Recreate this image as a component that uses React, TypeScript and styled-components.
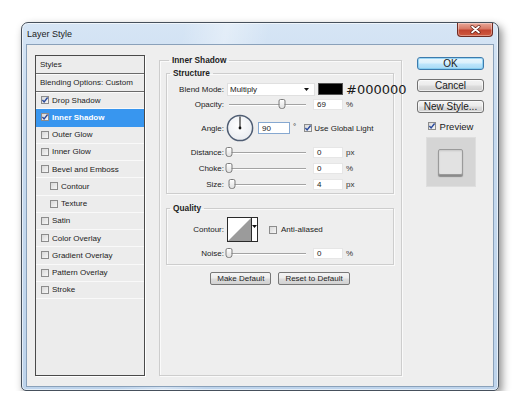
import { FC, ReactNode } from 'react';
import styled, { createGlobalStyle } from 'styled-components';

// effect list on the left side of the dialog
const STYLE_ITEMS = [
  { label: 'Drop Shadow', checked: true },
  { label: 'Inner Shadow', checked: true, selected: true },
  { label: 'Outer Glow' },
  { label: 'Inner Glow' },
  { label: 'Bevel and Emboss' },
  { label: 'Contour', sub: true },
  { label: 'Texture', sub: true },
  { label: 'Satin' },
  { label: 'Color Overlay' },
  { label: 'Gradient Overlay' },
  { label: 'Pattern Overlay' },
  { label: 'Stroke' },
];

const CheckBox: FC<{ checked?: boolean }> = ({ checked }) => (
  <Box>
    {checked && (
      <svg width="8" height="8" viewBox="0 0 8 8">
        <path d="M1.4 4.1 3.1 5.9 6.6 1.5" fill="none" stroke="#2a4a9c" strokeWidth="1.4" />
      </svg>
    )}
  </Box>
);

const Slider: FC<{ pos: number }> = ({ pos }) => (
  <Track>
    <Thumb style={{ left: `${pos * 100}%` }} />
  </Track>
);

interface SliderRowProps {
  label: string;
  value: string;
  unit: string;
  pos: number;
}

const SliderRow: FC<SliderRowProps> = ({ label, value, unit, pos }) => (
  <Row $h={14}>
    <Label>{label}</Label>
    <Slider pos={pos} />
    <Field>{value}</Field>
    <Unit>{unit}</Unit>
  </Row>
);

const Group: FC<{ title: string; children: ReactNode; className?: string }> = ({
  title,
  children,
  className,
}) => (
  <Fieldset className={className}>
    <Legend>{title}</Legend>
    {children}
  </Fieldset>
);

const App: FC = () => {
  return (
    <Page>
      <GlobalStyle />
      <Window>
        <TitleBar>
          <Title>Layer Style</Title>
          <CloseButton>
            <svg width="11" height="9" viewBox="0 0 11 9">
              <path d="M2 1.5 9 7.5M9 1.5 2 7.5" stroke="#5a1a12" strokeWidth="3" strokeLinecap="round" />
              <path d="M2 1.5 9 7.5M9 1.5 2 7.5" stroke="#fff" strokeWidth="1.7" strokeLinecap="round" />
            </svg>
          </CloseButton>
        </TitleBar>
        <Client>
          <StylesList>
            <ListHeader>Styles</ListHeader>
            <ListHeader>Blending Options: Custom</ListHeader>
            {STYLE_ITEMS.map((item) => (
              <Item key={item.label} $selected={item.selected} $sub={item.sub}>
                <CheckBox checked={item.checked} />
                <span>{item.label}</span>
              </Item>
            ))}
          </StylesList>

          <Settings title="Inner Shadow">
            <Group title="Structure">
              <Row $h={14}>
                <Label>Blend Mode:</Label>
                <Select>
                  <span>Multiply</span>
                  <svg width="5" height="3" viewBox="0 0 5 3">
                    <path d="M0 0h5L2.5 3z" fill="#111" />
                  </svg>
                </Select>
                <Swatch />
                <Hex>#000000</Hex>
              </Row>
              <Row $h={13}>
                <Label>Opacity:</Label>
                <Slider pos={0.69} />
                <Field>69</Field>
                <Unit>%</Unit>
              </Row>
              <Row $h={30}>
                <Label>Angle:</Label>
                <Dial>
                  <svg width="28" height="28" viewBox="0 0 28 28">
                    <defs>
                      <radialGradient id="dialFill" cx="45%" cy="40%" r="60%">
                        <stop offset="0" stopColor="#ffffff" />
                        <stop offset="1" stopColor="#e9ecf0" />
                      </radialGradient>
                    </defs>
                    <circle cx="14" cy="14" r="12.6" fill="url(#dialFill)" stroke="#4f5d73" strokeWidth="1.5" />
                    <line x1="14" y1="14" x2="14" y2="2.5" stroke="#1a1a1a" strokeWidth="1.1" />
                    <circle cx="14" cy="14" r="1.4" fill="#111" />
                  </svg>
                </Dial>
                <Field $focused>90</Field>
                <Degree>°</Degree>
                <CheckSpacer>
                  <CheckBox checked />
                </CheckSpacer>
                <CheckText>Use Global Light</CheckText>
              </Row>
              <SliderRow label="Distance:" value="0" unit="px" pos={0} />
              <SliderRow label="Choke:" value="0" unit="%" pos={0} />
              <SliderRow label="Size:" value="4" unit="px" pos={0.04} />
            </Group>

            <QualityGroup title="Quality">
              <Row $h={25}>
                <Label>Contour:</Label>
                <Contour>
                  <svg width="23" height="23" viewBox="0 0 23 23">
                    <path d="M0 23 23 0V23z" fill="#9b9b9b" />
                  </svg>
                  <ContourDrop>
                    <svg width="5" height="3" viewBox="0 0 5 3">
                      <path d="M0 0h5L2.5 3z" fill="#111" />
                    </svg>
                  </ContourDrop>
                </Contour>
                <CheckSpacer $gap={11}>
                  <CheckBox />
                </CheckSpacer>
                <CheckText $gap={4}>Anti-aliased</CheckText>
              </Row>
              <SliderRow label="Noise:" value="0" unit="%" pos={0} />
            </QualityGroup>

            <ButtonRow>
              <SmallButton>Make Default</SmallButton>
              <SmallButton>Reset to Default</SmallButton>
            </ButtonRow>
          </Settings>

          <Side>
            <DialogButton $default>OK</DialogButton>
            <DialogButton $top={9}>Cancel</DialogButton>
            <DialogButton $top={8}>New Style...</DialogButton>
            <PreviewRow>
              <CheckBox checked />
              <span>Preview</span>
            </PreviewRow>
            <PreviewBox>
              <PreviewTile />
            </PreviewBox>
          </Side>
        </Client>
      </Window>
    </Page>
  );
};

export default App;

const GlobalStyle = createGlobalStyle`
  html, body {
    margin: 0;
    background: #ffffff;
  }
  body {
    font-family: "Liberation Sans", Arial, sans-serif;
    color: #222;
  }
`;

const Page = styled.div`
  padding: 22px 0 0 21px;
`;

const Window = styled.div`
  width: 478px;
  height: 369px;
  box-sizing: border-box;
  display: flex;
  flex-direction: column;
  padding: 0 4px 3px;
  border: 1px solid #46505c;
  border-radius: 7px 7px 5px 5px;
  background:
    linear-gradient(100deg, rgba(255, 255, 255, 0) 30%, rgba(255, 255, 255, 0.35) 38%, rgba(255, 255, 255, 0) 46%),
    linear-gradient(180deg, #d6e5f5 0%, #c6daef 30%, #bed4ec 100%);
  box-shadow: 3px 4px 9px rgba(0, 0, 0, 0.45), inset 0 0 0 1px rgba(255, 255, 255, 0.6);
`;

const TitleBar = styled.div`
  height: 21px;
  display: flex;
  align-items: center;
  justify-content: space-between;
  padding: 0 1px;
`;

const Title = styled.div`
  font-size: 9px;
  color: #1c1c1c;
`;

const CloseButton = styled.div`
  align-self: flex-start;
  width: 36px;
  height: 14px;
  box-sizing: border-box;
  display: flex;
  align-items: center;
  justify-content: center;
  border: 1px solid #6f2b22;
  border-top: none;
  border-radius: 0 0 4px 4px;
  background: linear-gradient(180deg, #e9a899 0%, #d77966 45%, #c24430 55%, #cf5a3f 100%);
  box-shadow: inset 0 0 0 1px rgba(255, 255, 255, 0.35);
`;

const Client = styled.div`
  flex: 1;
  display: flex;
  padding: 10px 9px 10px 8px;
  border: 1px solid #8aa1ba;
  background: #eeeeee;
`;

/* left column: effect list */

const StylesList = styled.div`
  width: 110px;
  flex-shrink: 0;
  box-sizing: border-box;
  display: flex;
  flex-direction: column;
  border: 1px solid #4a4a4a;
  background: #ececec;
  box-shadow: 1px 1px 0 #ffffff;
`;

const ListHeader = styled.div`
  height: 18px;
  box-sizing: border-box;
  display: flex;
  align-items: center;
  padding-left: 4px;
  font-size: 8px;
  color: #1e1e1e;
  border-bottom: 1px solid #6a6a6a;
  box-shadow: 0 1px 0 #fbfbfb;
`;

const Item = styled.div<{ $selected?: boolean; $sub?: boolean }>`
  height: 17.25px;
  box-sizing: border-box;
  display: flex;
  align-items: center;
  gap: 3px;
  padding-left: ${(p) => (p.$sub ? 14 : 5)}px;
  font-size: 8px;
  font-weight: ${(p) => (p.$selected ? 700 : 400)};
  color: ${(p) => (p.$selected ? '#ffffff' : '#222')};
  background: ${(p) => (p.$selected ? '#3896ef' : 'transparent')};
  border-bottom: 1px solid ${(p) => (p.$selected ? '#3896ef' : '#f9f9f9')};
`;

const Box = styled.span`
  width: 8px;
  height: 8px;
  flex-shrink: 0;
  box-sizing: border-box;
  display: flex;
  align-items: center;
  justify-content: center;
  border: 1px solid #8c8c8c;
  background: linear-gradient(135deg, #d8d8d8 0%, #f7f7f7 100%);

  svg {
    margin: -1px;
  }
`;

/* middle column: settings */

const Fieldset = styled.fieldset`
  margin: 0;
  min-width: 0;
  padding: 4px 0 2px;
  border: 1px solid #cdcdcd;
  box-shadow: inset 1px 1px 0 #fafafa, 1px 1px 0 #fafafa;
  display: flex;
  flex-direction: column;
  gap: 2px;
`;

const Legend = styled.legend`
  margin-left: 3px;
  padding: 0 3px;
  font-size: 8.3px;
  line-height: 10px;
  font-weight: 700;
  color: #222;
`;

const Settings = styled(Group)`
  width: 243px;
  flex-shrink: 0;
  box-sizing: border-box;
  margin-left: 14px;
  padding: 3px 7px 0 6px;
  gap: 0;
`;

const QualityGroup = styled(Group)`
  margin-top: 9px;
  padding: 4px 0;
  gap: 4px;
`;

const Row = styled.div<{ $h: number }>`
  height: ${(p) => p.$h}px;
  display: flex;
  align-items: center;
  white-space: nowrap;
  font-size: 8px;

  & > * {
    flex-shrink: 0;
  }
`;

const Label = styled.div`
  width: 57px;
  text-align: right;
  font-size: 8px;
  color: #222;
`;

const Select = styled.div`
  width: 88px;
  height: 13px;
  box-sizing: border-box;
  margin-left: 3px;
  display: flex;
  align-items: center;
  justify-content: space-between;
  padding: 0 5px 0 2px;
  background: #ffffff;
  border: 1px solid #e0e0e0;
  font-size: 8px;
`;

const Swatch = styled.div`
  width: 25px;
  height: 12px;
  margin-left: 3px;
  background: #000000;
  border: 1px solid #555;
  box-sizing: border-box;
`;

const Hex = styled.div`
  margin-left: 3px;
  font-family: "DejaVu Sans", sans-serif;
  font-size: 13px;
  color: #1a1a1a;
`;

const Track = styled.div`
  position: relative;
  width: 77px;
  height: 1px;
  margin-left: 5px;
  background: #a3a3a3;
  box-shadow: 0 1px 0 #ffffff;
`;

const Thumb = styled.span`
  position: absolute;
  top: -5px;
  width: 7px;
  height: 10px;
  box-sizing: border-box;
  transform: translateX(-50%);
  border: 1px solid #7c7c7c;
  border-radius: 2px 2px 3px 3px;
  background: linear-gradient(180deg, #ffffff 0%, #e1e1e1 100%);
`;

const Field = styled.div<{ $focused?: boolean }>`
  width: ${(p) => (p.$focused ? 32 : 30)}px;
  height: ${(p) => (p.$focused ? 12 : 11)}px;
  box-sizing: border-box;
  margin-left: ${(p) => (p.$focused ? 4 : 7)}px;
  padding-left: 3px;
  display: flex;
  align-items: center;
  font-size: 8px;
  background: #ffffff;
  border: 1px solid ${(p) => (p.$focused ? '#86a8d0' : '#e6e6e6')};
`;

const Unit = styled.div`
  margin-left: 3px;
  font-size: 8px;
  color: #333;
`;

const Degree = styled.div`
  margin-left: 3px;
  align-self: flex-start;
  margin-top: 9px;
  font-size: 8px;
`;

const Dial = styled.div`
  margin-left: 2px;
  width: 28px;
  height: 28px;
`;

const CheckSpacer = styled.div<{ $gap?: number }>`
  margin-left: ${(p) => p.$gap ?? 8}px;
  display: flex;
`;

const CheckText = styled.div<{ $gap?: number }>`
  margin-left: ${(p) => p.$gap ?? 2}px;
  font-size: 8px;
  color: #222;
`;

const Contour = styled.div`
  margin-left: 3px;
  width: 31px;
  height: 25px;
  box-sizing: border-box;
  display: flex;
  border: 1px solid #2a2a2a;
  background: #ffffff;
`;

const ContourDrop = styled.div`
  flex: 1;
  display: flex;
  justify-content: center;
  padding-top: 7px;
  border-left: 1px solid #2a2a2a;
`;

const ButtonRow = styled.div`
  margin-top: 7px;
  display: flex;
  justify-content: center;
  gap: 7px;
`;

const SmallButton = styled.div`
  height: 13px;
  box-sizing: border-box;
  padding: 0 6px;
  display: flex;
  align-items: center;
  font-size: 8px;
  color: #1e1e1e;
  border: 1px solid #777;
  border-radius: 2px;
  background: linear-gradient(180deg, #f4f4f4 0%, #ececec 48%, #dcdcdc 52%, #d2d2d2 100%);
`;

/* right column */

const Side = styled.div`
  width: 67px;
  flex-shrink: 0;
  margin-left: 15px;
  display: flex;
  flex-direction: column;
  align-items: center;
`;

const DialogButton = styled.div<{ $default?: boolean; $top?: number }>`
  width: 100%;
  height: 13px;
  box-sizing: border-box;
  margin-top: ${(p) => p.$top ?? 2}px;
  display: flex;
  align-items: center;
  justify-content: center;
  font-size: 10px;
  color: #1a1a1a;
  border: 1px solid ${(p) => (p.$default ? '#3d7bad' : '#717171')};
  border-radius: 3px;
  background: ${(p) =>
    p.$default
      ? 'linear-gradient(180deg, #eaf6fd 0%, #d9f0fc 48%, #bee6fd 52%, #a7d9f5 100%)'
      : 'linear-gradient(180deg, #f3f3f3 0%, #ebebeb 48%, #dddddd 52%, #cfcfcf 100%)'};
  box-shadow: inset 0 0 0 1px ${(p) => (p.$default ? 'rgba(120, 200, 240, 0.7)' : 'rgba(255, 255, 255, 0.6)')};
`;

const PreviewRow = styled.div`
  margin-top: 7px;
  height: 12px;
  display: flex;
  align-items: center;
  gap: 4px;
  font-size: 9.5px;
  color: #1a1a1a;
`;

const PreviewBox = styled.div`
  margin-top: 5px;
  width: 50px;
  height: 50px;
  display: flex;
  align-items: center;
  justify-content: center;
  background: #d5d5d5;
  box-shadow: inset 0 0 0 1px #dedede;
`;

const PreviewTile = styled.div`
  width: 25px;
  height: 26px;
  box-sizing: border-box;
  border: 1px solid #9a9a9a;
  border-radius: 2px;
  background: #e2e2e2;
  box-shadow: 0 2px 1px rgba(0, 0, 0, 0.35), inset 0 1px 2px rgba(0, 0, 0, 0.12);
`;
